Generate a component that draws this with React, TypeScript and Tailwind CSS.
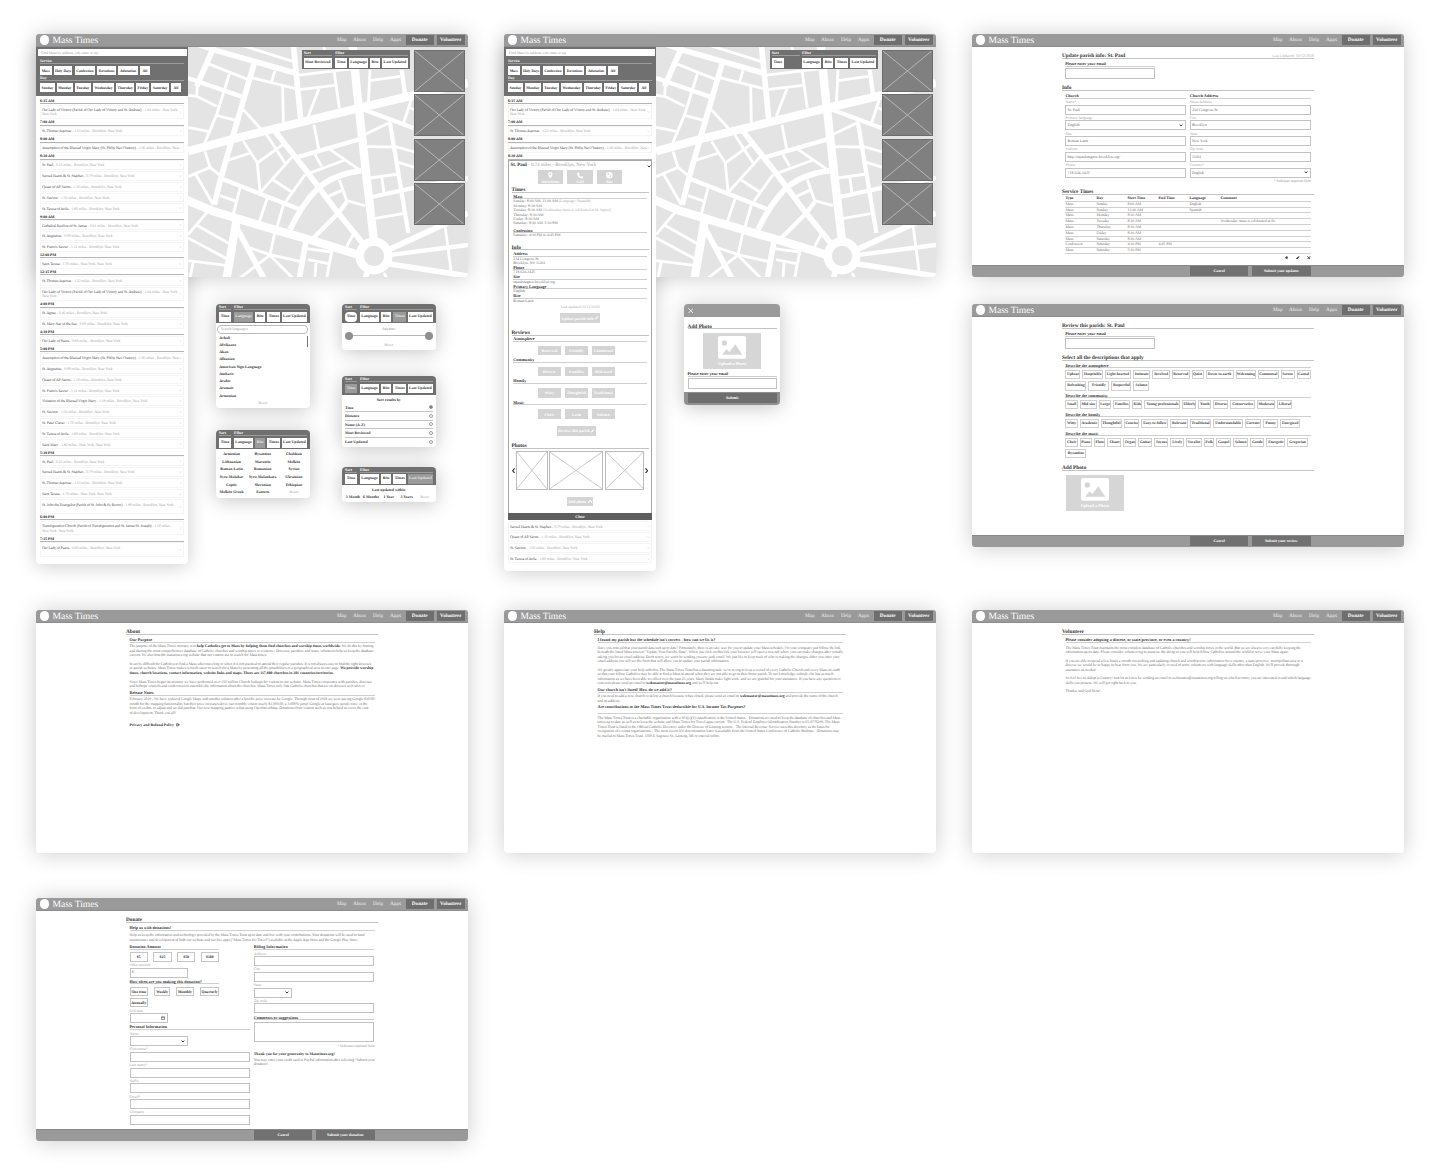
import React from 'react';

type Kids = { children?: React.ReactNode };
type Item = [string, string];

const BOARD_SHADOW = 'shadow-[0_1px_22px_rgba(0,0,0,0.2)]';

/* ---------- shared pieces ---------- */

function Header() {
  return (
    <header className="relative z-10 flex h-[13px] shrink-0 items-center rounded-t-[3px] border-b border-[#8d8d8d] bg-[#9a9a9a] pl-[3.5px] pr-[3.5px] text-white">
      <span className="h-[9.5px] w-[9.5px] rounded-full bg-white" />
      <span className="ml-[3.5px] pt-[2.6px] text-[9.5px] leading-[12px]">Mass Times</span>
      <nav className="ml-auto flex items-center text-[5.2px] leading-[11.6px] text-[#f0f0f0]">
        <span className="w-[16px] pt-[1.6px]">Map</span>
        <span className="w-[20px] pt-[1.6px]">About</span>
        <span className="w-[17px] pt-[1.6px]">Help</span>
        <span className="w-[16px] pt-[1.6px]">Apps</span>
        <b className="h-[10px] w-[27.5px] bg-[#6e6e6e] text-center text-white">Donate</b>
        <b className="ml-[3.5px] h-[10px] w-[27.5px] bg-[#6e6e6e] text-center text-white">Volunteer</b>
      </nav>
    </header>
  );
}

function Footer({ submit }: { submit: string }) {
  return (
    <footer className="mt-auto flex h-[12.3px] shrink-0 justify-end gap-[3.4px] rounded-b-[3px] border-t border-[#888] bg-[#9a9a9a] pr-[93.3px] text-[3.9px] font-bold leading-[10.4px] text-white">
      <span className="h-[10px] w-[58.6px] bg-[#717171] text-center">Cancel</span>
      <span className="h-[10px] w-[58.9px] bg-[#717171] text-center">{submit}</span>
    </footer>
  );
}

function Board({ children, footer }: Kids & { footer?: string }) {
  return (
    <section className={`flex h-[243px] w-[432px] flex-col rounded-[4px] bg-white ${BOARD_SHADOW}`}>
      <Header />
      <div className="ml-[90px] w-[252px] pt-[5.2px]">{children}</div>
      {footer && <Footer submit={footer} />}
    </section>
  );
}

function Title({ children, right }: Kids & { right?: string }) {
  return (
    <div className="flex h-[6.8px] items-start justify-between border-b border-[#c4c4c4] text-[5.3px] font-bold leading-[8.6px] text-[#333]">
      <span className="whitespace-nowrap">{children}</span>
      {right && <span className="text-[4px] font-normal text-[#aaa]">{right}</span>}
    </div>
  );
}

function Sub({ children, className = '' }: Kids & { className?: string }) {
  return (
    <div className={`h-[4.8px] whitespace-nowrap border-b border-[#cfcfcf] text-[4.1px] font-bold leading-[4.5px] text-[#333] ${className}`}>
      {children}
    </div>
  );
}

function Caret() {
  return (
    <svg viewBox="0 0 6 4" className="h-[2.6px] w-[4px]" fill="none" stroke="#222" strokeWidth="1.5">
      <path d="M1 1l2 2 2-2" />
    </svg>
  );
}

function Field({ label, value, select, w = 'w-full', icon }: { label: string; value?: string; select?: boolean; w?: string; icon?: boolean }) {
  return (
    <div className="h-[15.75px] pt-[1.2px]">
      <div className="h-[4.5px] text-[3.8px] leading-[5.2px] text-[#a4a4a4]">{label}</div>
      <div className={`flex h-[10px] items-center justify-between border border-[#c2c2c2] pl-[1.2px] pr-[2px] text-[3.9px] leading-[5px] text-[#666] ${w}`}>
        <span className="pt-[0.8px]">{value}</span>
        {select && <Caret />}
        {icon && (
          <svg viewBox="0 0 6 6" className="h-[4px] w-[4px]" fill="none" stroke="#555">
            <path d="M.7 1.2h4.6v4H.7zM.7 2.4h4.6" strokeWidth=".9" />
          </svg>
        )}
      </div>
    </div>
  );
}

/* ---------- map ---------- */

const WIDE = [
  'M24 370L150 335L545 238L700 202L864 165',
  'M10 512L100 550L300 610L400 638L540 682',
  'M518 50L530 180L560 450L582 640',
  'M170 575L140 750',
];
const MEDIUM = [
  'M222 108L160 320L120 460L103 530',
  'M24 38L110 68L345 135',
  'M100 60L50 175',
  'M340 50L362 272',
  'M285 310L380 430L470 550L560 660',
  'M165 590L252 752',
  'M620 668L790 590L864 555',
  'M610 705L870 745',
  'M378 640L358 750',
  'M566 720L556 750',
  'M330 605Q365 530 410 485T545 428',
];
const MID = [
  'M24 150L185 206',
  'M350 388L535 335',
  'M120 450L362 545',
  'M545 242L700 300',
  'M630 285L685 615',
  'M395 635L475 555L500 522',
  'M665 125L675 200',
  'M575 507L700 480L864 450',
  'M620 682L864 651',
];
const THIN = [
  'M148 138L110 260L74 345', 'M82 106L205 155', 'M110 262L170 278', 'M24 202L50 205L110 235', 'M52 168L50 205',
  'M24 298L85 310', 'M190 245L242 302', 'M308 172L310 288', 'M212 148L358 185L465 172', 'M285 128L275 160',
  'M417 182L385 264', 'M462 128L478 240', 'M350 142L520 122', 'M570 125L565 232', 'M570 158L660 145',
  'M402 290L417 368', 'M405 380L425 415', 'M385 437L495 396', 'M450 364L542 428', 'M260 320L315 405',
  'M308 350L232 405L190 340', 'M232 405L240 490', 'M142 397L212 375', 'M338 385L242 492', 'M318 520L375 440',
  'M280 456L335 492', 'M75 370L90 418L24 446', 'M90 418L130 450', 'M48 440L100 530', 'M180 480L160 558',
  'M120 503L170 520', 'M262 510L235 590', 'M312 525L290 600', 'M478 455L500 518L555 533', 'M445 505L490 485',
  'M570 450L655 438', 'M605 445L612 495', 'M582 572L668 557', 'M555 356L650 357L704 372', 'M550 322L632 282',
  'M655 403L704 418', 'M697 205L670 287', 'M690 240L702 245', 'M24 620L82 552', 'M50 592L150 648', 'M24 630L140 692',
  'M40 700L30 750', 'M24 698L138 712', 'M285 612L270 680L368 702', 'M205 658L270 680', 'M272 680L180 750',
  'M268 680L338 750', 'M384 695L445 707', 'M380 662L455 672L440 750', 'M408 705L405 750', 'M520 618L500 656',
  'M795 593L813 728', 'M185 52L338 100', 'M430 57L440 75', 'M612 735L620 750',
];

function StreetMap() {
  return (
    <svg viewBox="24 57 840 690" className="block h-[230px] w-[280px]" fill="none" stroke="#fff">
      <rect x="24" y="57" width="840" height="690" fill="#e4e4e4" stroke="none" />
      <g strokeWidth="8.5">{THIN.map((d) => <path key={d} d={d} />)}</g>
      <g strokeWidth="13">{MID.map((d) => <path key={d} d={d} />)}</g>
      <g strokeWidth="17">{MEDIUM.map((d) => <path key={d} d={d} />)}</g>
      <g strokeWidth="25">{WIDE.map((d) => <path key={d} d={d} />)}</g>
      <circle cx="582" cy="684" r="43" fill="#e4e4e4" strokeWidth="25" />
    </svg>
  );
}

function Crossed({ className, line }: { className: string; line: string }) {
  return (
    <div className={className}>
      <svg viewBox="0 0 10 10" preserveAspectRatio="none" className="block h-full w-full" stroke={line} fill="none">
        <path d="M0 0L10 10M10 0L0 10" vectorEffect="non-scaling-stroke" strokeWidth="0.8" />
      </svg>
    </div>
  );
}

/* ---------- filter bar ---------- */

function FilterGroup({ label, items, active, round }: { label: string; items: Item[]; active?: string; round?: boolean }) {
  return (
    <div>
      <div className="h-[5px] border-b border-[#9c9c9c] text-[3.9px] font-bold leading-[4.8px] text-white">{label}</div>
      <div className="mt-[1.7px] flex gap-[2px]">
        {items.map(([text, w]) => (
          <span
            key={text}
            className={`h-[9.6px] whitespace-nowrap text-center text-[3.9px] font-bold leading-[9.9px] ${w} ${
              text === active ? 'bg-[#9b9b9b] text-[#e6e6e6]' : 'bg-white text-[#333]'
            } ${round ? 'rounded-[4px]' : ''}`}
          >
            {text}
          </span>
        ))}
      </div>
    </div>
  );
}

const FILTERS: Item[] = [
  ['Language', 'w-[19px]'],
  ['Rite', 'w-[10.3px]'],
  ['Times', 'w-[12.8px]'],
  ['Last Updated', 'w-[24.6px]'],
];

function Popover({ place, active, round, children }: Kids & { place: string; active: string; round?: boolean }) {
  return (
    <div className={`absolute flex w-[93.5px] flex-col overflow-hidden rounded-[4px] bg-white text-[3.9px] font-bold text-[#333] shadow-[0_2px_20px_rgba(0,0,0,0.24)] ${place}`}>
      <div className="flex h-[18.4px] shrink-0 gap-[3px] bg-[#707070] pl-[3px] pt-[1px]">
        <FilterGroup label="Sort" items={[['Time', 'w-[12px]']]} active={active} round={round} />
        <FilterGroup label="Filter" items={FILTERS} active={active} />
      </div>
      {children}
    </div>
  );
}

function Reset({ className = '' }: { className?: string }) {
  return <span className={`text-center font-normal text-[#9aa2ac] ${className}`}>Reset</span>;
}

/* ---------- sidebar ---------- */

function Chips({ label, items }: { label: string; items: Item[] }) {
  return (
    <div className="mx-[4px] h-[17px]">
      <div className="h-[5px] border-b border-[#9c9c9c] text-[3.8px] font-bold leading-[4.8px] text-white">{label}</div>
      <div className="mt-[1.5px] flex gap-[2.2px]">
        {items.map(([text, w]) => (
          <span key={text} className={`h-[9.3px] bg-white text-center text-[3.7px] font-bold leading-[10px] text-[#333] ${w}`}>
            {text}
          </span>
        ))}
      </div>
    </div>
  );
}

function SearchPanel() {
  return (
    <div className="h-[48.6px] bg-[#707070] pt-[1.6px]">
      <div className="ml-[2px] h-[7.8px] w-[148.6px] bg-white pl-[3px] text-[3.9px] leading-[8.4px] tracking-[-0.08px] text-[#999]">
        Find Mass by address, city, state or zip
      </div>
      <div className="h-[3px]" />
      <Chips
        label="Service"
        items={[
          ['Mass', 'w-[11.5px]'],
          ['Holy Days', 'w-[18.7px]'],
          ['Confession', 'w-[20.7px]'],
          ['Devotions', 'w-[18.4px]'],
          ['Adoration', 'w-[20px]'],
          ['All', 'w-[9.3px]'],
        ]}
      />
      <Chips
        label="Day"
        items={[
          ['Sunday', 'w-[14.8px]'],
          ['Monday', 'w-[15.6px]'],
          ['Tuesday', 'w-[16.2px]'],
          ['Wednesday', 'w-[20.8px]'],
          ['Thursday', 'w-[18px]'],
          ['Friday', 'w-[12.8px]'],
          ['Saturday', 'w-[17.8px]'],
          ['All', 'w-[9.3px]'],
        ]}
      />
    </div>
  );
}

function Hour({ children }: Kids) {
  return <div className="h-[6.2px] border-b border-[#b5b5b5] text-[3.9px] font-bold leading-[6.2px] text-[#222]">{children}</div>;
}

type Place = { n: string; d: string; more?: string; tall?: boolean };

function Row({ n, d, more, tall }: Place) {
  return (
    <div className={tall ? 'h-[15.3px] py-[0.5px]' : 'h-[10.8px] py-[0.5px]'}>
      <div className="flex h-full items-center justify-between border border-[#f5f5f5] pl-[0.9px] pr-[1px]">
        <div className="h-full whitespace-nowrap pt-[2.3px] text-[3.8px] leading-[4.5px] tracking-[-0.075px] text-[#a2a2a2]">
          <span className="text-[#4a4a4a]">{n}</span> - {d}
          {more && <div>{more}</div>}
        </div>
        <svg viewBox="0 0 6 4" className="h-[2px] w-[3px] shrink-0" fill="none" stroke="#c4c4c4">
          <path d="M1 1l2 2 2-2" />
        </svg>
      </div>
    </div>
  );
}

const BK = 'Brooklyn, New York';
const victory: Place = { n: 'Our Lady of Victory (Parish of Our Lady of Victory and St. Andrew)', d: '1.64 miles - New York,', more: 'New York', tall: true };
const aquinas: Place = { n: 'St. Thomas Aquinas', d: `1.22 miles - ${BK}` };
const assumption: Place = { n: 'Assumption of the Blessed Virgin Mary (St. Philip Neri Oratory)', d: '1.06 miles - Brooklyn, New' };
const paul: Place = { n: 'St. Paul', d: `0.23 miles - ${BK}` };
const hearts: Place = { n: 'Sacred Hearts & St. Stephen', d: `0.79 miles - ${BK}` };
const queen: Place = { n: 'Queen of All Saints', d: `1.10 miles - ${BK}` };
const saviour: Place = { n: 'St. Saviour', d: `1.56 miles - ${BK}` };
const avila: Place = { n: 'St. Teresa of Avila', d: `1.80 miles - ${BK}` };
const augustine: Place = { n: 'St. Augustine', d: `0.99 miles - ${BK}` };
const xavier: Place = { n: 'St. Francis Xavier', d: `1.12 miles - ${BK}` };
const teresa: Place = { n: 'Saint Teresa', d: '1.76 miles - New York, New York' };
const peace: Place = { n: 'Our Lady of Peace', d: `0.85 miles - ${BK}` };

const MORNING: [string, Place[]][] = [
  ['6:15 AM', [victory]],
  ['7:00 AM', [aquinas]],
  ['8:00 AM', [assumption]],
];
const REST: [string, Place[]][] = [
  ['8:30 AM', [paul, hearts, queen, saviour, avila]],
  ['9:00 AM', [{ n: 'Cathedral Basilica of St. James', d: `0.61 miles - ${BK}` }, augustine, xavier]],
  ['12:00 PM', [teresa]],
  ['12:15 PM', [aquinas, victory]],
  ['4:00 PM', [{ n: 'St. Agnes', d: `0.46 miles - ${BK}` }, { n: 'St. Mary Star of the Sea', d: `0.69 miles - ${BK}` }]],
  ['4:30 PM', [peace]],
  [
    '5:00 PM',
    [
      assumption,
      augustine,
      queen,
      xavier,
      { n: 'Visitation of the Blessed Virgin Mary', d: `1.18 miles - ${BK}` },
      saviour,
      { n: 'St. Peter Claver', d: `1.76 miles - ${BK}` },
      avila,
      { n: 'Saint Mary', d: '1.82 miles - New York, New York' },
    ],
  ],
  [
    '5:30 PM',
    [paul, hearts, aquinas, teresa, { n: 'St. John the Evangelist (Parish of St. John & St. Rocco)', d: '1.89 miles - Brooklyn, New York', tall: true }],
  ],
  ['6:00 PM', [{ n: 'Transfiguration Church (Parish of Transfiguration and St. James/St. Joseph)', d: '1.50 miles -', more: 'New York, New York', tall: true }]],
  ['7:15 PM', [{ ...peace, tall: true }]],
];

function Schedule({ data }: { data: [string, Place[]][] }) {
  return (
    <>
      {data.map(([hour, places]) => (
        <div key={hour}>
          <Hour>{hour}</Hour>
          {places.map((p) => <Row key={p.n} {...p} />)}
        </div>
      ))}
    </>
  );
}

function MapBoard({ aside, asideHeight, sortW, sortItem, filters, children }: Kids & {
  aside: React.ReactNode; asideHeight: string; sortW: string; sortItem: Item; filters: Item[];
}) {
  return (
    <section className="relative">
      <div className={`h-[243px] w-[432px] rounded-[4px] bg-white ${BOARD_SHADOW}`}>
        <Header />
        <div className="flex items-start">
          <aside className={`w-[152px] shrink-0 rounded-b-[4px] bg-white shadow-[0_2px_20px_rgba(0,0,0,0.2)] ${asideHeight}`}>
            <SearchPanel />
            <div className="px-[4px] pt-[2.4px]">{aside}</div>
          </aside>
          <div className="relative h-[230px] w-[280px] overflow-hidden rounded-br-[4px]">
            <StreetMap />
            <div className="absolute left-[114px] top-[3.3px] flex h-[18.7px] w-[108px] justify-between bg-[#707070] pl-[1.7px] pr-[2.3px] pt-[1px]">
              <div className={sortW}>
                <FilterGroup label="Sort" items={[sortItem]} />
              </div>
              <FilterGroup label="Filter" items={filters} />
            </div>
            <div className="absolute right-[3.5px] top-[3.3px] flex flex-col gap-[2.2px]">
              {[0, 1, 2, 3].map((i) => (
                <Crossed key={i} line="#c4c4c4" className="h-[42px] w-[50.7px] border border-[#6c6c6c] bg-[#808080]" />
              ))}
            </div>
          </div>
        </div>
      </div>
      {children}
    </section>
  );
}

/* ---------- parish detail ---------- */

function GreyButton({ children, className = '' }: Kids & { className?: string }) {
  return (
    <span className={`flex h-[9.6px] items-center justify-center gap-[1.5px] whitespace-nowrap bg-[#d4d4d4] text-[4px] font-bold leading-[5px] text-white ${className}`}>
      {children}
    </span>
  );
}

function Pencil({ className }: { className: string }) {
  return (
    <svg viewBox="0 0 10 10" className={className} fill="currentColor">
      <path d="M0 10l.6-3L6 1.6 8.4 4 3 9.4zM6.8.9l.9-.9L10 2.3l-.9.9z" />
    </svg>
  );
}

function Facts({ title, lines, gap = '' }: { title: string; lines: React.ReactNode[]; gap?: string }) {
  return (
    <div className={gap}>
      <Sub className="h-[4.7px]!">{title}</Sub>
      {lines.map((l, i) => (
        <div key={i} className="h-[4.45px] whitespace-nowrap text-[3.9px] leading-[5.6px] tracking-[-0.03px] text-[#6c6c6c]">{l}</div>
      ))}
    </div>
  );
}

const REVIEWS: [string, string[]][] = [
  ['Atmosphere', ['Reserved', 'Friendly', 'Communal']],
  ['Community', ['Diverse', 'Families', 'Mid-sized']],
  ['Homily', ['Witty', 'Thoughtful', 'Traditional']],
  ['Music', ['Choir', 'Latin', 'Solemn']],
];

function ParishDetail() {
  const bigIcons: [string, React.ReactNode][] = [
    ['Directions', <path key="a" d="M5 0a3.4 3.4 0 0 0-3.4 3.5C1.6 6 5 10 5 10s3.4-4 3.4-6.5A3.4 3.4 0 0 0 5 0zm0 4.8a1.4 1.4 0 1 1 0-2.8 1.4 1.4 0 0 1 0 2.8z" />],
    ['Call', <path key="b" d="M.5 1L2.6.2 4 3.2 2.8 4.2c.6 1.3 1.6 2.3 3 3L6.8 6l3 1.4L9 9.6C4 10.3-.2 6 .5 1z" />],
    ['Site', <path key="c" d="M5 0a5 5 0 1 0 0 10A5 5 0 0 0 5 0zM3 1.8l2.5.4L4.2 4 2 4.5zM6 4.8l2.5.5L7 8 5.6 7z" fillRule="evenodd" />],
  ];
  return (
    <div className="mt-[0.8px] flex h-[359.5px] flex-col border border-b-0 border-[#a8a8a8]">
      <div className="flex h-[8.8px] items-center justify-between pl-[1.5px] pr-[0.5px] text-[4.9px] leading-[8px] text-[#999]">
        <span className="whitespace-nowrap pt-[1px]"><b className="text-[#333]">St. Paul</b> - 0.23 miles - Brooklyn, New York</span>
        <Caret />
      </div>
      <div className="flex justify-center gap-[3.7px]">
        {bigIcons.map(([t, p]) => (
          <span key={t} className="flex h-[14.2px] w-[25.8px] flex-col items-center bg-[#d4d4d4] pt-[1.8px] text-[4px] font-bold leading-[5px] text-white">
            <svg viewBox="0 0 10 10" className="h-[6.6px] w-[6.6px]" fill="#fff">{p}</svg>
            {t}
          </span>
        ))}
      </div>
      <div className="px-[2.5px] pt-[2px]">
        <Title>Times</Title>
        <div className="px-[1.8px] pt-[1.4px]">
          <Facts
            title="Mass"
            lines={[
              <>Sunday: 8:00 AM, 11:00 AM <span className="text-[#aaa]">(Language: Spanish)</span></>,
              'Monday: 8:30 AM',
              <>Tuesday: 8:30 AM <span className="text-[#aaa]">(Wednesday mass is celebrated at St. Agnes)</span></>,
              'Thursday: 8:30 AM',
              'Friday: 8:30 AM',
              'Saturday: 8:30 AM, 5:30 PM',
            ]}
          />
          <Facts gap="mt-[2.6px]" title="Confession" lines={['Saturday: 4:30 PM to 4:45 PM']} />
        </div>
        <div className="h-[6px]" />
        <Title>Info</Title>
        <div className="px-[1.8px] pt-[1.8px]">
          <Facts title="Address" lines={['234 Congress St.', 'Brooklyn, NY 11201']} />
          <Facts title="Phone" lines={['718-624-3425']} />
          <Facts gap="mt-[0.5px]" title="Site" lines={['stpaulstagnes-brooklyn.org']} />
          <Facts gap="mt-[0.2px]" title="Primary Language" lines={['English']} />
          <Facts gap="mt-[0.2px]" title="Rite" lines={['Roman Latin']} />
        </div>
        <div className="mt-[2px] text-center text-[3.9px] leading-[5px] text-[#aaa]">Last updated 10/12/2018</div>
        <GreyButton className="mx-auto mt-[3.2px] w-[39.3px]">Update parish info <Pencil className="h-[3.5px] w-[3.5px]" /></GreyButton>
        <div className="h-[6.2px]" />
        <Title>Reviews</Title>
        <div className="px-[1.8px] pt-[1.2px]">
          {REVIEWS.map(([t, items]) => (
            <div key={t} className="h-[21.2px]">
              <Sub>{t}</Sub>
              <div className="mt-[3.8px] flex justify-center gap-[3.5px] pr-[7.4px]">
                {items.map((x) => <GreyButton key={x} className="w-[23.5px]">{x}</GreyButton>)}
              </div>
            </div>
          ))}
        </div>
        <GreyButton className="ml-[45.4px] mt-[4.2px] w-[39.3px]">Review this parish <Pencil className="h-[3.5px] w-[3.5px]" /></GreyButton>
        <div className="h-[6.3px]" />
        <Title>Photos</Title>
        <div className="mt-[2.2px] flex items-center justify-between text-[#222]">
          <svg viewBox="0 0 4 7" className="h-[5.5px] w-[3.2px]" fill="none" stroke="currentColor" strokeWidth="1.4"><path d="M3.3.6L.9 3.5l2.4 2.9" /></svg>
          <div className="flex gap-[1.5px]">
            <Crossed line="#bbb" className="h-[38.7px] w-[31.8px] border border-[#bbb]" />
            <Crossed line="#bbb" className="h-[38.7px] w-[54px] border border-[#bbb]" />
            <Crossed line="#bbb" className="h-[38.7px] w-[39.5px] border border-[#bbb]" />
          </div>
          <svg viewBox="0 0 4 7" className="h-[5.5px] w-[3.2px]" fill="none" stroke="currentColor" strokeWidth="1.4"><path d="M.7.6l2.4 2.9L.7 6.4" /></svg>
        </div>
        <GreyButton className="mx-auto mt-[7px] w-[26px]">
          Add photo
          <svg viewBox="0 0 10 8" className="h-[3.6px] w-[4.2px]" fill="#fff"><path d="M0 2h3l1-2h3l1 2h2v6H0zM5 3a1.8 1.8 0 1 0 .01 0z" fillRule="evenodd" /></svg>
        </GreyButton>
      </div>
      <div className="-mx-px mt-auto h-[6.5px] bg-[#5e5e5e] text-center text-[4px] font-bold leading-[7px] text-white">Close</div>
    </div>
  );
}

function UploadTile({ className = '' }: { className?: string }) {
  return (
    <div className={`flex h-[36px] w-[58.3px] flex-col items-center bg-[#d6d6d6] pt-[3.3px] text-[4.3px] font-bold leading-[9px] text-white ${className}`}>
      <svg viewBox="0 0 84 68" className="h-[22.7px] w-[28px] shrink-0" fill="#d6d6d6">
        <rect width="84" height="68" rx="6" fill="#fff" />
        <circle cx="19" cy="21" r="8" />
        <path d="M13 56l12-16 9 8 18-23 21 31z" />
      </svg>
      Upload a Photo
    </div>
  );
}

/* ---------- text pages ---------- */

function Para({ lines, className = '' }: { lines: React.ReactNode[]; className?: string }) {
  return (
    <div className={className}>
      {lines.map((l, i) => (
        <div key={i} className="h-[4.43px] whitespace-nowrap text-[3.85px] leading-[5.8px] tracking-[-0.072px] text-[#6e6e6e]">{l}</div>
      ))}
    </div>
  );
}

function Strong({ children }: Kids) {
  return <b className="tracking-normal text-[#333]">{children}</b>;
}

const TIMES: string[][] = [
  ['Mass', 'Sunday', '8:00 AM', '', 'English', ''],
  ['Mass', 'Sunday', '11:00 AM', '', 'Spanish', ''],
  ['Mass', 'Monday', '8:30 AM', '', '', ''],
  ['Mass', 'Tuesday', '8:30 AM', '', '', 'Wednesday mass is celebrated at St.'],
  ['Mass', 'Thursday', '8:30 AM', '', '', ''],
  ['Mass', 'Friday', '8:30 AM', '', '', ''],
  ['Mass', 'Saturday', '8:30 AM', '', '', ''],
  ['Confession', 'Saturday', '4:30 PM', '4:45 PM', '', ''],
  ['Mass', 'Saturday', '5:30 PM', '', '', ''],
];

function EmailBlock() {
  return (
    <div className="ml-[3.3px] mt-[3.1px] w-[90.2px]">
      <Sub>Please enter your email</Sub>
      <div className="mt-[1.5px] h-[10.3px] border border-[#c2c2c2]" />
    </div>
  );
}

function UpdateBoard() {
  return (
    <Board footer="Submit your updates">
      <Title right="Last Updated: 10/12/2018">Update parish info: St. Paul</Title>
      <EmailBlock />
      <div className="h-[5.8px]" />
      <Title>Info</Title>
      <div className="mx-[3.4px] mt-[2.7px] grid grid-cols-2 gap-x-[3.4px]">
        <div>
          <Sub className="mb-[0.2px]">Church</Sub>
          <Field label="Name*" value="St. Paul" />
          <Field label="Primary language" value="English" select />
          <Field label="Rite" value="Roman Latin" />
          <Field label="Website" value="http://stpaulstagnes-brooklyn.org/" />
          <Field label="Phone" value="718-624-3425" />
        </div>
        <div>
          <Sub className="mb-[0.2px]">Church Address</Sub>
          <Field label="Street Address" value="234 Congress St." />
          <Field label="City" value="Brooklyn" />
          <Field label="State" value="New York" />
          <Field label="Zip code" value="11201" />
          <Field label="Country*" value="English" select />
        </div>
      </div>
      <div className="mr-[3.4px] mt-[1.2px] text-right text-[3.7px] leading-[4px] text-[#999]">* Indicates required field</div>
      <div className="h-[5.4px]" />
      <Title>Service Times</Title>
      <div className="mx-[3.4px] mt-[0.8px] text-[3.9px] text-[#6c6c6c]">
        {[['Type', 'Day', 'Start Time', 'End Time', 'Language', 'Comment'], ...TIMES].map((r, i) => (
          <div
            key={i}
            className={`grid h-[5.84px] grid-cols-[31px_31px_31px_31px_31px_1fr] whitespace-nowrap border-b border-[#d0d0d0] leading-[5.8px] ${
              i === 0 ? 'font-bold text-[#333]' : 'tracking-[-0.03px]'
            }`}
          >
            {r.map((c, j) => <span key={j}>{c}</span>)}
          </div>
        ))}
        <div className="mt-[1.5px] flex justify-end gap-[7.5px] text-[#222]">
          <svg viewBox="0 0 8 8" className="h-[3.6px] w-[3.6px]" fill="none" stroke="currentColor" strokeWidth="1.8"><path d="M4 0v8M0 4h8" /></svg>
          <Pencil className="h-[3.6px] w-[3.6px]" />
          <svg viewBox="0 0 8 8" className="h-[3.6px] w-[3.6px]" fill="none" stroke="currentColor" strokeWidth="1.8"><path d="M.5.5l7 7M7.5.5l-7 7" /></svg>
        </div>
      </div>
    </Board>
  );
}

function TagSection({ label, rows, className = '' }: { label: string; rows: Item[][]; className?: string }) {
  return (
    <div className={`mx-[3.4px] ${className}`}>
      <Sub className="h-[4.2px]! leading-[3.6px]!">{label}</Sub>
      {rows.map((row, i) => (
        <div key={i} className="mt-[1.8px] flex gap-[2px]">
          {row.map(([t, w]) => (
            <span key={t} className={`h-[9.5px] shrink-0 whitespace-nowrap border border-[#d0d0d0] text-center text-[3.8px] font-bold leading-[7.9px] tracking-[-0.02px] text-[#444] ${w}`}>{t}</span>
          ))}
        </div>
      ))}
    </div>
  );
}

function ReviewBoard() {
  return (
    <Board footer="Submit your review">
      <Title>Review this parish: St. Paul</Title>
      <EmailBlock />
      <div className="h-[5.6px]" />
      <Title>Select all the descriptions that apply</Title>
      <TagSection
        className="mt-[2.7px]"
        label="Describe the atmosphere"
        rows={[
          [['Upbeat', 'w-[15px]'], ['Hospitable', 'w-[20.5px]'], ['Light-hearted', 'w-[26px]'], ['Intimate', 'w-[17.5px]'], ['Involved', 'w-[17.5px]'], ['Reserved', 'w-[17.7px]'], ['Quiet', 'w-[12px]'], ['Down-to-earth', 'w-[28px]'], ['Welcoming', 'w-[20.5px]'], ['Communal', 'w-[20.5px]'], ['Serene', 'w-[14px]'], ['Casual', 'w-[14px]']],
          [['Refreshing', 'w-[21px]'], ['Friendly', 'w-[21px]'], ['Respectful', 'w-[20px]'], ['Solemn', 'w-[16px]']],
        ]}
      />
      <TagSection
        className="mt-[3.3px]"
        label="Describe the community"
        rows={[[['Small', 'w-[12.5px]'], ['Mid-size', 'w-[17px]'], ['Large', 'w-[12.3px]'], ['Families', 'w-[17px]'], ['Kids', 'w-[10.3px]'], ['Young professionals', 'w-[36px]'], ['Elderly', 'w-[14px]'], ['Youth', 'w-[12.5px]'], ['Diverse', 'w-[15.5px]'], ['Conservative', 'w-[24.5px]'], ['Moderate', 'w-[18.5px]'], ['Liberal', 'w-[14.5px]']]]}
      />
      <TagSection
        className="mt-[3.4px]"
        label="Describe the homily"
        rows={[[['Witty', 'w-[12.5px]'], ['Academic', 'w-[19px]'], ['Thoughtful', 'w-[21px]'], ['Concise', 'w-[15.5px]'], ['Easy-to-follow', 'w-[27px]'], ['Relevant', 'w-[17.5px]'], ['Traditional', 'w-[21.5px]'], ['Understandable', 'w-[29.5px]'], ['Current', 'w-[16px]'], ['Funny', 'w-[15.5px]'], ['Energized', 'w-[19.5px]']]]}
      />
      <TagSection
        className="mt-[3.4px]"
        label="Describe the music"
        rows={[
          [['Choir', 'w-[12.5px]'], ['Piano', 'w-[12px]'], ['Flute', 'w-[11.5px]'], ['Chant', 'w-[14px]'], ['Organ', 'w-[13px]'], ['Guitar', 'w-[14px]'], ['Joyous', 'w-[14px]'], ['Lively', 'w-[13.5px]'], ['Vocalist', 'w-[16px]'], ['Folk', 'w-[10.5px]'], ['Gospel', 'w-[14.5px]'], ['Solemn', 'w-[15.5px]'], ['Gentle', 'w-[14px]'], ['Energetic', 'w-[19px]'], ['Gregorian', 'w-[20.5px]']],
          [['Byzantine', 'w-[21px]']],
        ]}
      />
      <div className="h-[6px]" />
      <Title>Add Photo</Title>
      <UploadTile className="ml-[3.7px] mt-[4px]" />
    </Board>
  );
}

function AboutBoard() {
  return (
    <Board>
      <Title>About</Title>
      <div className="mx-[3.5px] pt-[2.8px]">
        <Sub>Our Purpose</Sub>
        <Para
          className="mt-[1.7px]"
          lines={[
            <>The purpose of the Mass Times ministry is to <Strong>help Catholics get to Mass by helping them find churches and worship times worldwide.</Strong> We do this by hosting</>,
            'and sharing the most comprehensive database of Catholic churches and worship times in existence. Dioceses, parishes, and many volunteers help us keep the database',
            'current. We also host the masstimes.org website that our visitors use to search for Mass times.',
          ]}
        />
        <Para
          className="mt-[4.4px]"
          lines={[
            'It can be difficult for Catholics to find a Mass when traveling or when it is not practical to attend their regular parishes. It is not always easy to find the right dioceses',
            <>or parish websites. Mass Times makes it much easier to search for a Mass by presenting all the possibilities in a geographical area on one page. <Strong>We provide worship</Strong></>,
            <Strong>times, church locations, contact information, website links and maps. There are 117,000 churches in 201 countries/territories.</Strong>,
          ]}
        />
        <Para
          className="mt-[4.4px]"
          lines={[
            'Since Mass Times began its ministry we have performed over 150 million Church lookups for visitors to our website. Mass Times cooperates with parishes, dioceses',
            "and bishops' councils and conferences to assemble the information about the churches. Mass Times only lists Catholic churches that are on dioceses web sites or",
          ]}
        />
        <Sub className="mt-[3px]">Release Notes</Sub>
        <Para
          className="mt-[1.2px]"
          lines={[
            'February 2019 - We have replaced Google Maps with another solution after a horrific price increase by Google. Through most of 2018 we were paying Google $30.00/',
            'month for the mapping functionality but their price increases drove our monthly cost to nearly $1,000.00, a 3,000% jump! Google at least gave people time, in the',
            'form of credits, to adjust and we did just that. Our new mapping partner is fast using OpenStreetMap. Donations from visitors such as you helped us cover the cost',
            'of development. Thank you all!',
          ]}
        />
        <div className="mt-[7.5px] flex items-center gap-[2px] text-[3.9px] font-bold leading-[4.4px] text-[#333]">
          Privacy and Refund Policy
          <svg viewBox="0 0 8 8" className="h-[3.6px] w-[3.6px]" fill="none" stroke="currentColor" strokeWidth="1.2"><path d="M1 1.5h4v5H1zM3 4h4.5M6 2.3L7.6 4 6 5.7" /></svg>
        </div>
      </div>
    </Board>
  );
}

function HelpBoard() {
  return (
    <Board>
      <Title>Help</Title>
      <div className="mx-[3.5px] pt-[2.8px]">
        <Sub>I found my parish but the schedule isn't correct - how can we fix it?</Sub>
        <Para
          className="mt-[3.1px]"
          lines={[
            'Have you noticed that your parish data isn\'t up to date? Fortunately, there is an easy way for you to update your Mass schedule. On your computer just follow the link',
            'beneath the listed Mass times to "Update Your Parish\'s Data". When you click on this link your browser will open a new tab where you can make changes after initially',
            'asking you for an email address. Don\'t worry, we won\'t be sending you any junk email. We just like to keep track of who is making the changes. After you enter your',
            'email address you will see the form that will allow you to update your parish information.',
          ]}
        />
        <Para
          className="mt-[4.5px]"
          lines={[
            "We greatly appreciate your help with this. The Mass Times Trust has a daunting task; we're trying to keep a record of every Catholic Church and every Mass on earth",
            'so that your fellow Catholics may be able to find a Mass to attend when they are not able to go to their home parish. To our knowledge, nobody else has as much',
            'information as we have been able to collect over the past 25 years. Many hands make light work, and we are grateful for your assistance. If you have any questions or',
            <>concerns please send an email to <Strong>webmaster@masstimes.org</Strong> and we'll help out.</>,
          ]}
        />
        <Sub className="mt-[2.6px]">Our church isn't listed! How do we add it?</Sub>
        <Para
          className="mt-[1.4px]"
          lines={[
            <>If you need to add a new church or delete a church because it has closed, please send an email to <Strong>webmaster@masstimes.org</Strong> and provide the name of the church</>,
            'and its address.',
          ]}
        />
        <Sub className="mt-[2.2px] h-[8.5px]!">Are contributions to the Mass Times Trust deductible for U.S. Income Tax Purposes?</Sub>
        <Para
          className="mt-[2px]"
          lines={[
            <>The Mass Times Trust is a charitable organization with a 501(c)(3) classification in the United States. &nbsp; Donations are used to keep the database of churches and Mass</>,
            <>times up to date as well as to keep the website and Mass Times for Travel apps current. &nbsp;The U.S. Federal Employer Identification Number is 65-0776299. The Mass</>,
            <>Times Trust is listed in the Official Catholic Directory under the Diocese of Lansing section. &nbsp; The Internal Revenue Service uses this directory as the basis for</>,
            <>recognition of exempt organizations. &nbsp; The most recent 501 determination letter is available from the United States Conference of Catholic Bishops. &nbsp; Donations may</>,
            'be mailed to Mass Times Trust, 1500 E Saginaw St., Lansing, MI or entered online.',
          ]}
        />
      </div>
    </Board>
  );
}

function VolunteerBoard() {
  return (
    <Board>
      <Title>Volunteer</Title>
      <div className="mx-[3.5px] pt-[2.8px]">
        <Sub>Please consider adopting a diocese, or state/province, or even a country!</Sub>
        <Para
          className="mt-[3.3px]"
          lines={[
            'The Mass Times Trust maintains the most complete database of Catholic churches and worship times in the world. But we are always very carefully keeping the',
            'information up-to-date. Please consider volunteering to assist us. By doing so you will help fellow Catholics around the world to serve your Mass again.',
          ]}
        />
        <Para
          className="mt-[4.2px]"
          lines={[
            'If you are able to spend a few hours a month researching and updating church and worship time information for a country, a state/province, metropolitan area or a',
            'diocese we would be so happy to hear from you. We are particularly in need of some volunteers with language skills other than English. We\'ll provide thorough',
            'assistance as needed.',
          ]}
        />
        <Para
          className="mt-[4.2px]"
          lines={[
            'So feel free to Adopt a Country! Just let us know by sending an email to webmaster@masstimes.org telling us which territory you are interested in and which language',
            'skills you possess. We will get right back to you.',
          ]}
        />
        <Para className="mt-[3.7px]" lines={['Thanks, and God bless!']} />
      </div>
    </Board>
  );
}

function Choice({ children, className = '' }: Kids & { className?: string }) {
  return <span className={`h-[9.5px] shrink-0 whitespace-nowrap border border-[#c6c6c6] text-center text-[3.8px] font-bold leading-[8.2px] text-[#333] ${className}`}>{children}</span>;
}

function DonateBoard() {
  return (
    <Board footer="Submit your donation">
      <Title>Donate</Title>
      <div className="mx-[3.5px] pt-[2.8px]">
        <Sub>Help us with donations!</Sub>
        <Para
          className="mt-[2.9px]"
          lines={[
            'Help us keep the information and technology provided by the Mass Times Trust up to date and free with your contributions. Your donations will be used to fund',
            'maintenance and development of both our website and our free apps ("Mass Times for Travel") available at the Apple App Store and the Google Play Store.',
          ]}
        />
        <div className="mt-[3px] grid grid-cols-[120.8px_120.6px] gap-x-[3.4px]">
          <div>
            <Sub className="w-[89.8px]">Donation Amount</Sub>
            <div className="mb-[0.4px] mt-[1.9px] flex gap-[5.2px]">
              {['$5', '$25', '$50', '$100'].map((x) => <Choice key={x} className="w-[18.5px]">{x}</Choice>)}
            </div>
            <Field label="Other amount" value="$" w="w-[58.7px]" />
            <Sub className="mt-[2px] w-[89.8px]">How often are you making this donation?</Sub>
            <div className="mt-[2.2px] flex w-[89.8px] justify-between">
              <Choice className="w-[18.7px]">One time</Choice>
              <Choice className="w-[15.5px]">Weekly</Choice>
              <Choice className="w-[17.5px]">Monthly</Choice>
              <Choice className="w-[19.3px]">Quarterly</Choice>
            </div>
            <div className="mt-[1.8px] flex">
              <Choice className="w-[18.7px]">Annually</Choice>
            </div>
            <Field label="End date" w="w-[38px]" icon />
            <Sub className="mb-[0.3px] mt-[2.1px]">Personal Information</Sub>
            <Field label="Name" select w="w-[58.7px]" />
            <Field label="First name*" />
            <Field label="Last name*" />
            <Field label="Suffix" />
            <Field label="Email*" />
            <Field label="Company" />
          </div>
          <div>
            <Sub className="mb-[0.4px]">Billing Information</Sub>
            <Field label="Address" />
            <Field label="City" />
            <Field label="State" select w="w-[38px]" />
            <Field label="Zip code" />
            <Sub className="mt-[2.2px]">Comments or suggestions</Sub>
            <div className="mt-[2px] h-[20px] border border-[#c2c2c2]" />
            <div className="mt-[1.3px] text-right text-[3.7px] leading-[4px] text-[#999]">* Indicates required field</div>
            <div className="mt-[4px] text-[3.9px] font-bold leading-[4.4px] text-[#333]">Thank you for your generosity to Masstimes.org!</div>
            <Para className="mt-[1.6px]" lines={['You may enter your credit card or PayPal information after selecting "Submit your', 'donation".']} />
          </div>
        </div>
      </div>
    </Board>
  );
}

const LANGUAGES = ['Acholi', 'Afrikaans', 'Akan', 'Albanian', 'American Sign Language', 'Amharic', 'Arabic', 'Aramaic', 'Armenian'];
const RITES = ['Armenian', 'Byzantine', 'Chaldean', 'Lithuanian', 'Maronite', 'Melkite', 'Roman-Latin', 'Romanian', 'Syrian', 'Syro-Malabar', 'Syro-Malankara', 'Ukrainian', 'Coptic', 'Slovenian', 'Ethiopian', 'Melkite Greek', 'Eastern'];

function Popovers() {
  return (
    <>
      <Popover place="left-[180px] top-[270.3px] h-[103.4px]" active="Language">
        <div className="ml-[1.3px] mt-[2.6px] h-[8.4px] w-[90.7px] rounded-[4px] border border-[#bbb] pl-[2.5px] font-normal leading-[7px] text-[#999]">Search languages</div>
        <div className="flex h-[65.5px] justify-between pl-[3.3px] pr-[1.4px]">
          <div>{LANGUAGES.map((l) => <div key={l} className="h-[7.24px] leading-[8.8px]">{l}</div>)}</div>
          <div className="mt-[2.6px] h-[11px] w-[1.2px] bg-[#777]" />
        </div>
        <Reset className="mt-[1.4px]" />
      </Popover>
      <Popover place="left-[180px] top-[396.3px] h-[67.4px]" active="Rite">
        <div className="grid grid-cols-3 pt-[2.2px] text-center leading-[7.68px]">
          {RITES.map((r) => <span key={r}>{r}</span>)}
          <Reset />
        </div>
      </Popover>
      <Popover place="left-[306px] top-[270.3px] h-[45.7px]" active="Times" round>
        <div className="mt-[4px] text-center font-normal leading-[5.5px] text-[#888]">Anytime</div>
        <div className="mx-[3px] flex h-[7.6px] items-center">
          <span className="h-[7.6px] w-[7.6px] rounded-full bg-[#8f8f8f]" />
          <span className="h-px flex-1 bg-[#b5b5b5]" />
          <span className="h-[7.6px] w-[7.6px] rounded-full bg-[#8f8f8f]" />
        </div>
        <Reset className="mt-[3.2px]" />
      </Popover>
      <Popover place="left-[306px] top-[342.2px] h-[71.2px]" active="Time">
        <div className="mt-[3.6px] text-center leading-[5.5px]">Sort results by</div>
        {['Time', 'Distance', 'Name (A-Z)', 'Most Reviewed', 'Last Updated'].map((s, i) => (
          <div key={s} className={`mx-[3px] flex h-[8.5px] items-center justify-between leading-[8px] ${i < 4 ? 'border-b border-[#c4c4c4]' : ''}`}>
            <span className="pt-[1px]">{s}</span>
            <span className={`h-[4px] w-[4px] rounded-full border border-[#a0a0a0] ${i === 0 ? 'bg-[#777]' : ''}`} />
          </div>
        ))}
      </Popover>
      <Popover place="left-[306px] top-[432.5px] h-[35.2px]" active="Last Updated">
        <div className="mt-[2.9px] text-center leading-[5.5px]">Last updated within</div>
        <div className="mt-[1.7px] grid grid-cols-5 px-[2px] text-center leading-[5.5px]">
          {['3 Month', '6 Months', '1 Year', '3 Years'].map((x) => <span key={x}>{x}</span>)}
          <Reset />
        </div>
      </Popover>
    </>
  );
}

function PhotoModal() {
  return (
    <div className="absolute left-[180.3px] top-[270px] flex h-[100.7px] w-[96px] flex-col overflow-hidden rounded-[4px] bg-white shadow-[0_2px_20px_rgba(0,0,0,0.24)]">
      <div className="flex h-[13px] shrink-0 items-center bg-[#9a9a9a] pl-[3.5px]">
        <svg viewBox="0 0 8 8" className="h-[5.5px] w-[5.5px]" stroke="#fff" strokeWidth="1.2"><path d="M.5.5l7 7M7.5.5l-7 7" /></svg>
      </div>
      <div className="mx-[3.3px] mt-[5.5px]">
        <Title>Add Photo</Title>
        <UploadTile className="mx-auto mt-[3.7px]" />
        <Sub className="mt-[3px]">Please enter your email</Sub>
        <div className="mt-[1.5px] h-[10.3px] border border-[#c2c2c2]" />
      </div>
      <div className="mt-auto h-[12.7px] bg-[#909090] px-[3.3px] pt-[1.3px]">
        <div className="h-[10px] bg-[#6e6e6e] text-center text-[4px] font-bold leading-[10.4px] text-white">Submit</div>
      </div>
    </div>
  );
}

export default function App() {
  return (
    <main className="grid h-[1174px] w-[1440px] grid-cols-[432px_432px_432px] grid-rows-[576px_288px_243px] gap-x-9 overflow-hidden bg-white px-9 pt-[34px] font-['Liberation_Serif',serif] [text-rendering:geometricPrecision]">
      <MapBoard
        asideHeight="h-[517px]"
        sortW="w-[28px]"
        sortItem={['Most Reviewed', 'w-[28px]']}
        filters={[['Time', 'w-[12px]'], ['Language', 'w-[18.7px]'], ['Rite', 'w-[10.3px]'], ['Last Updated', 'w-[25.6px]']]}
        aside={<Schedule data={[...MORNING, ...REST]} />}
      >
        <Popovers />
      </MapBoard>
      <MapBoard
        asideHeight="h-[524px]"
        sortW="w-[28px]"
        sortItem={['Time', 'w-[12px]']}
        filters={[['Language', 'w-[19px]'], ['Rite', 'w-[10.3px]'], ['Times', 'w-[12.8px]'], ['Last Updated', 'w-[25.6px]']]}
        aside={
          <>
            <Schedule data={MORNING} />
            <Hour>8:30 AM</Hour>
            <ParishDetail />
            <div className="h-[0.8px]" />
            {[hearts, queen, saviour, avila].map((p) => <Row key={p.n} {...p} />)}
          </>
        }
      >
        <PhotoModal />
      </MapBoard>
      <div className="flex flex-col gap-[27px]">
        <UpdateBoard />
        <ReviewBoard />
      </div>
      <AboutBoard />
      <HelpBoard />
      <VolunteerBoard />
      <DonateBoard />
    </main>
  );
}
